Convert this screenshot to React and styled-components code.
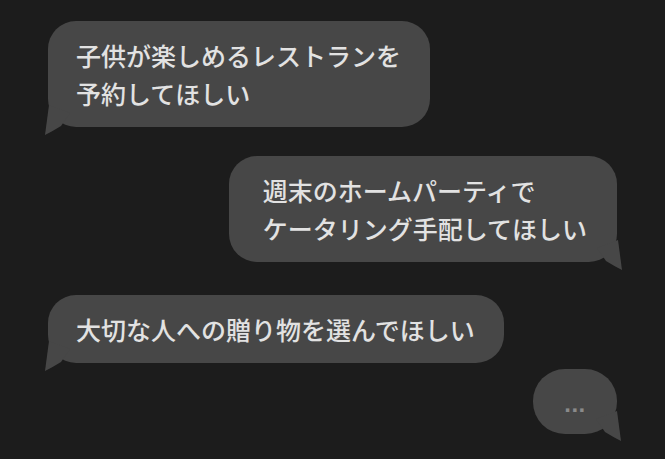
import React from "react";
import styled, { createGlobalStyle, css } from "styled-components";

const GlobalStyle = createGlobalStyle`
  html, body {
    margin: 0;
    padding: 0;
    background: #1c1c1c;
  }
  body {
    font-family: "Noto Sans CJK JP", "Noto Sans", sans-serif;
  }
`;

const Screen = styled.div`
  width: 665px;
  height: 459px;
  box-sizing: border-box;
  padding: 21px 48px 0;
  display: flex;
  flex-direction: column;
  background: #1c1c1c;
  overflow: hidden;
`;

const Bubble = styled.div`
  position: relative;
  align-self: ${(p) => (p.$side === "right" ? "flex-end" : "flex-start")};
  margin-top: ${(p) => p.$gap || 0}px;
  padding: ${(p) => (p.$side === "right" ? "15px 30px 15px 34px" : "15px 29px 15px 28px")};
  background: #474747;
  border-radius: 28px;
  color: #e2e2e2;
  font-size: 25px;
  line-height: 38px;
  font-weight: 500;
  white-space: nowrap;

  &::after {
    content: "";
    position: absolute;
    bottom: -9px;
    width: 26px;
    height: 31px;
    background: #474747;
    clip-path: path("M5 0 L1 30 Q9 26 17 21 L26 8 Z");
    ${(p) =>
      p.$side === "right"
        ? css`
            right: -6px;
            transform: scaleX(-1);
          `
        : css`
            left: -4px;
          `}
  }
`;

const Typing = styled(Bubble)`
  width: 84px;
  height: 65px;
  box-sizing: border-box;
  padding: 5px 0 0;
  border-radius: 32px;
  display: flex;
  align-items: center;
  justify-content: center;
  color: #8a8a8a;
  font-family: "Liberation Sans", sans-serif;
  font-size: 24px;
  line-height: 24px;
  font-weight: 700;
  letter-spacing: 0.5px;

  &::after {
    bottom: -8px;
    right: -5px;
  }
`;

export default function App() {
  return (
    <>
      <GlobalStyle />
      <Screen>
        <Bubble $side="left">
          子供が楽しめるレストランを
          <br />
          予約してほしい
        </Bubble>
        <Bubble $side="right" $gap={29}>
          週末のホームパーティで
          <br />
          ケータリング手配してほしい
        </Bubble>
        <Bubble $side="left" $gap={33}>
          大切な人への贈り物を選んでほしい
        </Bubble>
        <Typing $side="right" $gap={6}>
          ...
        </Typing>
      </Screen>
    </>
  );
}
